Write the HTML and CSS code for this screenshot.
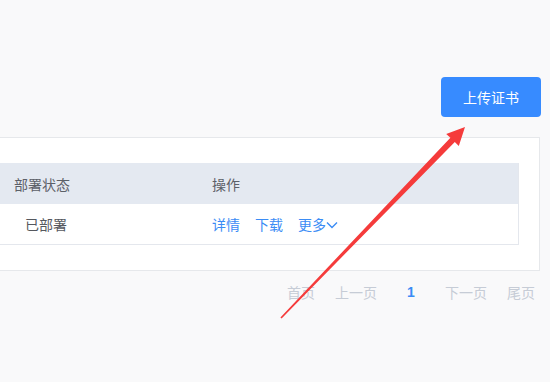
FILE: index.html
```html
<!DOCTYPE html>
<html lang="zh">
<head>
<meta charset="utf-8">
<link rel="stylesheet" href="styles.css">
</head>
<body>
<div class="page">
  <div class="toolbar">
    <button class="btn-primary">上传证书</button>
  </div>
  <div class="card">
    <div class="table">
      <div class="row head">
        <div class="cell c1">部署状态</div>
        <div class="cell c2">操作</div>
      </div>
      <div class="row body">
        <div class="cell c1 status">已部署</div>
        <div class="cell c2 ops">
          <a class="link">详情</a>
          <a class="link">下载</a>
          <a class="link more">更多<svg class="chev" width="12" height="8" viewBox="0 0 12 8"><path d="M1 1.5 L6 6.5 L11 1.5" fill="none" stroke="currentColor" stroke-width="1.4"/></svg></a>
        </div>
      </div>
    </div>
  </div>
  <div class="pager">
    <span class="pg">首页</span>
    <span class="pg">上一页</span>
    <span class="pg current">1</span>
    <span class="pg">下一页</span>
    <span class="pg">尾页</span>
  </div>
  <svg class="arrow" width="550" height="382" viewBox="0 0 550 382">
    <polygon points="465,127 458.8,146 454.8,142 281.6,318.4 280.4,317.4 450.4,137.8 446.2,134" fill="#f53b3b"/>
  </svg>
</div>
</body>
</html>
```

FILE: styles.css
```css
* { box-sizing: border-box; }
html, body {
  margin: 0;
  padding: 0;
  background: #f9f9fa;
  font-family: "Noto Sans CJK SC", "Noto Sans", sans-serif;
  font-size: 14px;
}
.page {
  position: relative;
  width: 550px;
  height: 382px;
  overflow: hidden;
}
.toolbar {
  display: flex;
  justify-content: flex-end;
  padding: 77px 9px 0 0;
}
.btn-primary {
  width: 100px;
  height: 40px;
  border: none;
  border-radius: 4px;
  background: #378bff;
  color: #fff;
  font-family: inherit;
  font-size: 14px;
  padding: 0;
}
.card {
  margin: 20px 10px 0 -20px;
  background: #fff;
  border: 1px solid #e6e8eb;
  padding: 25px 20px 25px 0;
}
.table {
  border-right: 1px solid #e4e7ed;
  border-bottom: 1px solid #e4e7ed;
}
.row {
  display: flex;
  align-items: center;
}
.row.head {
  height: 41px;
  background: #e4e9f1;
  color: #5c6068;
}
.row.body {
  height: 40px;
  background: #fff;
  color: #55585e;
}
.c1 {
  width: 231px;
  padding-left: 33px;
}
.c1.status {
  padding-left: 44px;
}
.c2 {
  flex: 1;
}
.ops {
  display: flex;
  align-items: center;
  gap: 15px;
}
.link {
  color: #3b8cf5;
  display: inline-flex;
  align-items: center;
}
.chev {
  margin-top: 2px;
}
.pager {
  display: flex;
  justify-content: flex-end;
  align-items: center;
  gap: 20px;
  margin-top: 10px;
  padding-right: 15px;
  height: 22px;
  color: #c6ccd6;
}
.pg.current {
  width: 28px;
  text-align: center;
  color: #3b8cf5;
  font-weight: bold;
  font-family: "Liberation Sans", Arial, sans-serif;
}
.arrow {
  position: absolute;
  left: 0;
  top: 0;
  pointer-events: none;
}
```
